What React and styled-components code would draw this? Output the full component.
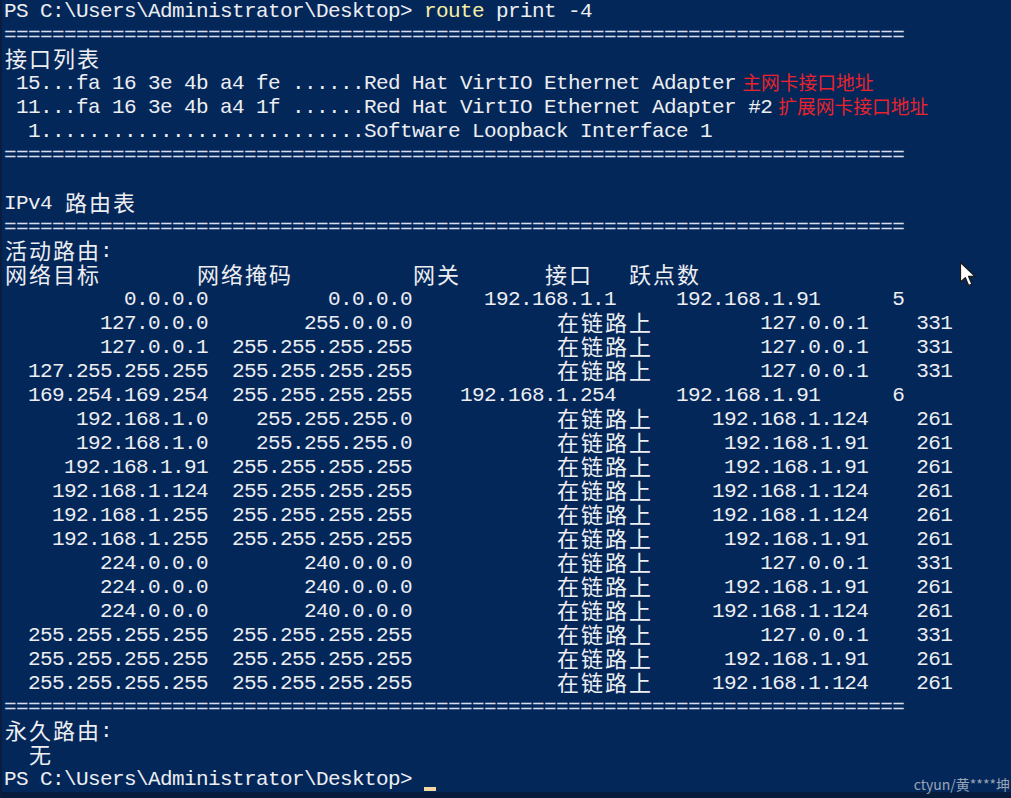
import React from "react";
import styled, { createGlobalStyle } from "styled-components";

// PowerShell palette
const BG = "#04275a";
const FG = "#eceef2";

const GlobalStyle = createGlobalStyle`
  html, body {
    margin: 0;
    padding: 0;
    background: ${BG};
    overflow: hidden;
  }
`;

const Screen = styled.div`
  position: relative;
  height: 100vh;
  display: flex;
  flex-direction: column;
  border-left: 2px solid #0b1d3f;
  box-sizing: border-box;
`;

const Console = styled.div`
  flex: 1;
  padding-left: 2px;
  font-family: "Liberation Mono", "DejaVu Sans Mono", monospace;
  font-size: 21px;
  letter-spacing: -0.6px;
  color: ${FG};
`;

const Line = styled.div`
  height: 24px;
  line-height: 24px;
  white-space: pre;
  color: ${({ $tone }) => ($tone === "rule" ? "#d6deec" : FG)};
`;

// CJK glyphs take two console cells
const Wide = styled.span`
  display: inline-block;
  width: 24px;
  height: 24px;
  vertical-align: top;
  text-align: center;
  letter-spacing: 0;
  font-family: "Noto Sans CJK SC", sans-serif;
  font-size: 22px;
  line-height: 18px;
`;

const Cmd = styled.span`
  color: #f6efa6;
`;

const Note = styled.span`
  display: inline-block;
  height: 24px;
  vertical-align: top;
  margin-left: 6px;
  letter-spacing: 0;
  font-family: "Noto Sans CJK SC", sans-serif;
  font-size: 18.8px;
  line-height: 20px;
  color: #e8232d;
`;

const Caret = styled.span`
  display: inline-block;
  width: 12px;
  height: 4px;
  vertical-align: -6px;
  background: #f3d6a0;
`;

const BottomBar = styled.div`
  height: 6px;
  background: #071b3d;
`;

const Pointer = styled.svg`
  position: absolute;
  left: 957px;
  top: 261px;
`;

const Watermark = styled.div`
  position: absolute;
  right: 1px;
  bottom: 6px;
  font-family: "Noto Sans CJK SC", sans-serif;
  font-size: 14px;
  line-height: 16px;
  color: #98a4b8;
`;

const CJK = /[\u2e80-\u9fff\uf900-\ufaff\uff00-\uffef]/;

const width = (s) => [...s].reduce((n, c) => n + (CJK.test(c) ? 2 : 1), 0);
const lpad = (s, w) => " ".repeat(Math.max(0, w - width(s))) + s;

function Text({ s }) {
  const out = [];
  let run = "";
  [...s].forEach((c, i) => {
    if (CJK.test(c)) {
      if (run) out.push(run);
      run = "";
      out.push(<Wide key={i}>{c}</Wide>);
    } else {
      run += c;
    }
  });
  if (run) out.push(run);
  return <>{out}</>;
}

const ONLINK = "在链路上";

const routes = [
  ["0.0.0.0", "0.0.0.0", "192.168.1.1", "192.168.1.91", "5"],
  ["127.0.0.0", "255.0.0.0", ONLINK, "127.0.0.1", "331"],
  ["127.0.0.1", "255.255.255.255", ONLINK, "127.0.0.1", "331"],
  ["127.255.255.255", "255.255.255.255", ONLINK, "127.0.0.1", "331"],
  ["169.254.169.254", "255.255.255.255", "192.168.1.254", "192.168.1.91", "6"],
  ["192.168.1.0", "255.255.255.0", ONLINK, "192.168.1.124", "261"],
  ["192.168.1.0", "255.255.255.0", ONLINK, "192.168.1.91", "261"],
  ["192.168.1.91", "255.255.255.255", ONLINK, "192.168.1.91", "261"],
  ["192.168.1.124", "255.255.255.255", ONLINK, "192.168.1.124", "261"],
  ["192.168.1.255", "255.255.255.255", ONLINK, "192.168.1.124", "261"],
  ["192.168.1.255", "255.255.255.255", ONLINK, "192.168.1.91", "261"],
  ["224.0.0.0", "240.0.0.0", ONLINK, "127.0.0.1", "331"],
  ["224.0.0.0", "240.0.0.0", ONLINK, "192.168.1.91", "261"],
  ["224.0.0.0", "240.0.0.0", ONLINK, "192.168.1.124", "261"],
  ["255.255.255.255", "255.255.255.255", ONLINK, "127.0.0.1", "331"],
  ["255.255.255.255", "255.255.255.255", ONLINK, "192.168.1.91", "261"],
  ["255.255.255.255", "255.255.255.255", ONLINK, "192.168.1.124", "261"],
];

// on-link rows come out a few cells wider, as the console prints them
const routeLine = ([dest, mask, gw, iface, metric]) =>
  gw === ONLINK
    ? lpad(dest, 17) + lpad(mask, 17) + lpad(gw, 20) + lpad(iface, 18) + lpad(metric, 7)
    : lpad(dest, 17) + lpad(mask, 17) + lpad(gw, 17) + lpad(iface, 17) + lpad(metric, 7);

const PROMPT = "PS C:\\Users\\Administrator\\Desktop> ";
const RULE = "=".repeat(75);
const HEADER = "网络目标        网络掩码          网关       接口   跃点数";

function Rule() {
  return <Line $tone="rule">{RULE}</Line>;
}

export default function App() {
  return (
    <Screen>
      <GlobalStyle />
      <Console>
        <Line>
          {PROMPT}
          <Cmd>route</Cmd> print -4
        </Line>
        <Rule />
        <Line><Text s="接口列表" /></Line>
        <Line>
          {" 15...fa 16 3e 4b a4 fe ......Red Hat VirtIO Ethernet Adapter"}
          <Note>主网卡接口地址</Note>
        </Line>
        <Line>
          {" 11...fa 16 3e 4b a4 1f ......Red Hat VirtIO Ethernet Adapter #2"}
          <Note>扩展网卡接口地址</Note>
        </Line>
        <Line>{"  1...........................Software Loopback Interface 1"}</Line>
        <Rule />
        <Line> </Line>
        <Line><Text s="IPv4 路由表" /></Line>
        <Rule />
        <Line><Text s="活动路由:" /></Line>
        <Line><Text s={HEADER} /></Line>
        {routes.map((r, i) => (
          <Line key={i}><Text s={routeLine(r)} /></Line>
        ))}
        <Rule />
        <Line><Text s="永久路由:" /></Line>
        <Line><Text s="  无" /></Line>
        <Line>
          {PROMPT}
          <Caret />
        </Line>
      </Console>
      <BottomBar />

      <Pointer width="19" height="27" viewBox="0 0 19 27">
        <path
          d="M1.5 1.5 L1.5 21 L6.3 16.6 L9.6 24.5 L12.8 23.1 L9.6 15.4 L16 15.4 Z"
          fill="#ffffff"
          stroke="#1a1a1a"
          strokeWidth="1.2"
          strokeLinejoin="round"
        />
      </Pointer>
      <Watermark>ctyun/黄****坤</Watermark>
    </Screen>
  );
}
